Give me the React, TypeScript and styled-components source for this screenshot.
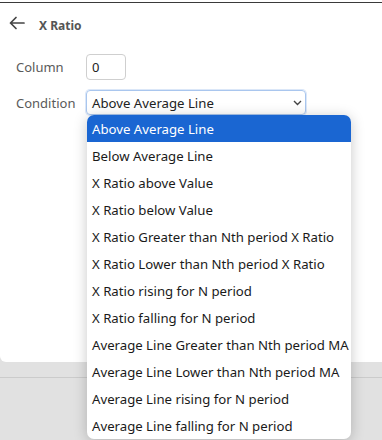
import { useState } from "react";
import styled, { createGlobalStyle } from "styled-components";

const GlobalStyle = createGlobalStyle`
  html, body {
    margin: 0;
    padding: 0;
    background: #e1e1e1;
    font-family: "Segoe UI", "Noto Sans", "Open Sans", sans-serif;
  }
`;

const Screen = styled.div`
  width: 382px;
  height: 440px;
  overflow: hidden;
  background: #e1e1e1;
  display: flex;
  flex-direction: column;
`;

const TopStrip = styled.div`
  height: 2px;
  background: #ffffff;
  border-bottom: 1px solid #3a3a3a;
`;

const Panel = styled.div`
  height: 359px;
  background: #ffffff;
  border-bottom-left-radius: 6px;
  display: flex;
  flex-direction: column;
`;

const Footer = styled.div`
  height: 15px;
  border-bottom: 1px solid #cbcbcb;
`;

const Header = styled.div`
  display: flex;
  align-items: center;
  gap: 14px;
  padding: 7px 0 0 9px;
  height: 30px;
`;

const BackButton = styled.button`
  border: 0;
  background: none;
  padding: 0;
  margin-top: -4px;
  display: flex;
  color: #444;
  cursor: pointer;
`;

const Title = styled.h1`
  margin: 0;
  font-size: 12px;
  font-weight: 700;
  color: #555;
`;

const Form = styled.div`
  display: grid;
  grid-template-columns: 70px auto;
  row-gap: 10px;
  padding: 14px 0 0 16px;
  align-items: center;
`;

const Label = styled.label`
  font-size: 13px;
  color: #5a5a5a;
`;

const TextInput = styled.input`
  width: 40px;
  height: 26px;
  box-sizing: border-box;
  border: 1px solid #cfcfcf;
  border-radius: 4px;
  padding: 0 5px;
  font: inherit;
  font-size: 13px;
  color: #222;
`;

const SelectWrap = styled.div`
  position: relative;
  width: 220px;
`;

const SelectBox = styled.div`
  height: 25px;
  box-sizing: border-box;
  border: 1px solid #a9c6ee;
  box-shadow: 0 0 0 1px #dbe7f8;
  border-radius: 4px;
  display: flex;
  align-items: center;
  justify-content: space-between;
  padding: 0 3px 0 5px;
  font-size: 13.2px;
  color: #222;
`;

const Menu = styled.ul`
  position: absolute;
  top: 25px;
  left: 1px;
  width: 264px;
  margin: 0;
  padding: 0;
  list-style: none;
  background: #ffffff;
  border-radius: 7px;
  overflow: hidden;
  box-shadow: 0 2px 14px rgba(0, 0, 0, 0.22);
`;

const Option = styled.li<{ $active: boolean }>`
  height: 27px;
  display: flex;
  align-items: center;
  padding-left: 5px;
  font-size: 13.2px;
  white-space: nowrap;
  color: ${({ $active }) => ($active ? "#ffffff" : "#1a1a1a")};
  background: ${({ $active }) => ($active ? "#1a66d2" : "transparent")};
`;

const options = [
  "Above Average Line",
  "Below Average Line",
  "X Ratio above Value",
  "X Ratio below Value",
  "X Ratio Greater than Nth period X Ratio",
  "X Ratio Lower than Nth period X Ratio",
  "X Ratio rising for N period",
  "X Ratio falling for N period",
  "Average Line Greater than Nth period MA",
  "Average Line Lower than Nth period MA",
  "Average Line rising for N period",
  "Average Line falling for N period",
];

export default function App() {
  const [selected] = useState(0);

  return (
    <Screen>
      <GlobalStyle />
      <TopStrip />
      <Panel>
        <Header>
          <BackButton aria-label="Back">
            <svg width="16" height="14" viewBox="0 0 16 14" fill="none" stroke="currentColor" strokeWidth="1.7" strokeLinecap="round" strokeLinejoin="round">
              <path d="M15 7H1.5M7 1.5L1.5 7L7 12.5" />
            </svg>
          </BackButton>
          <Title>X Ratio</Title>
        </Header>
        <Form>
          <Label>Column</Label>
          <TextInput defaultValue="0" />
          <Label>Condition</Label>
          <SelectWrap>
            <SelectBox>
              <span>{options[selected]}</span>
              <svg width="9" height="6" viewBox="0 0 9 6" fill="none" stroke="#444" strokeWidth="1.4">
                <path d="M1 1l3.5 3.5L8 1" />
              </svg>
            </SelectBox>
            <Menu>
              {options.map((o, i) => (
                <Option key={o} $active={i === selected}>
                  {o}
                </Option>
              ))}
            </Menu>
          </SelectWrap>
        </Form>
      </Panel>
      <Footer />
    </Screen>
  );
}
